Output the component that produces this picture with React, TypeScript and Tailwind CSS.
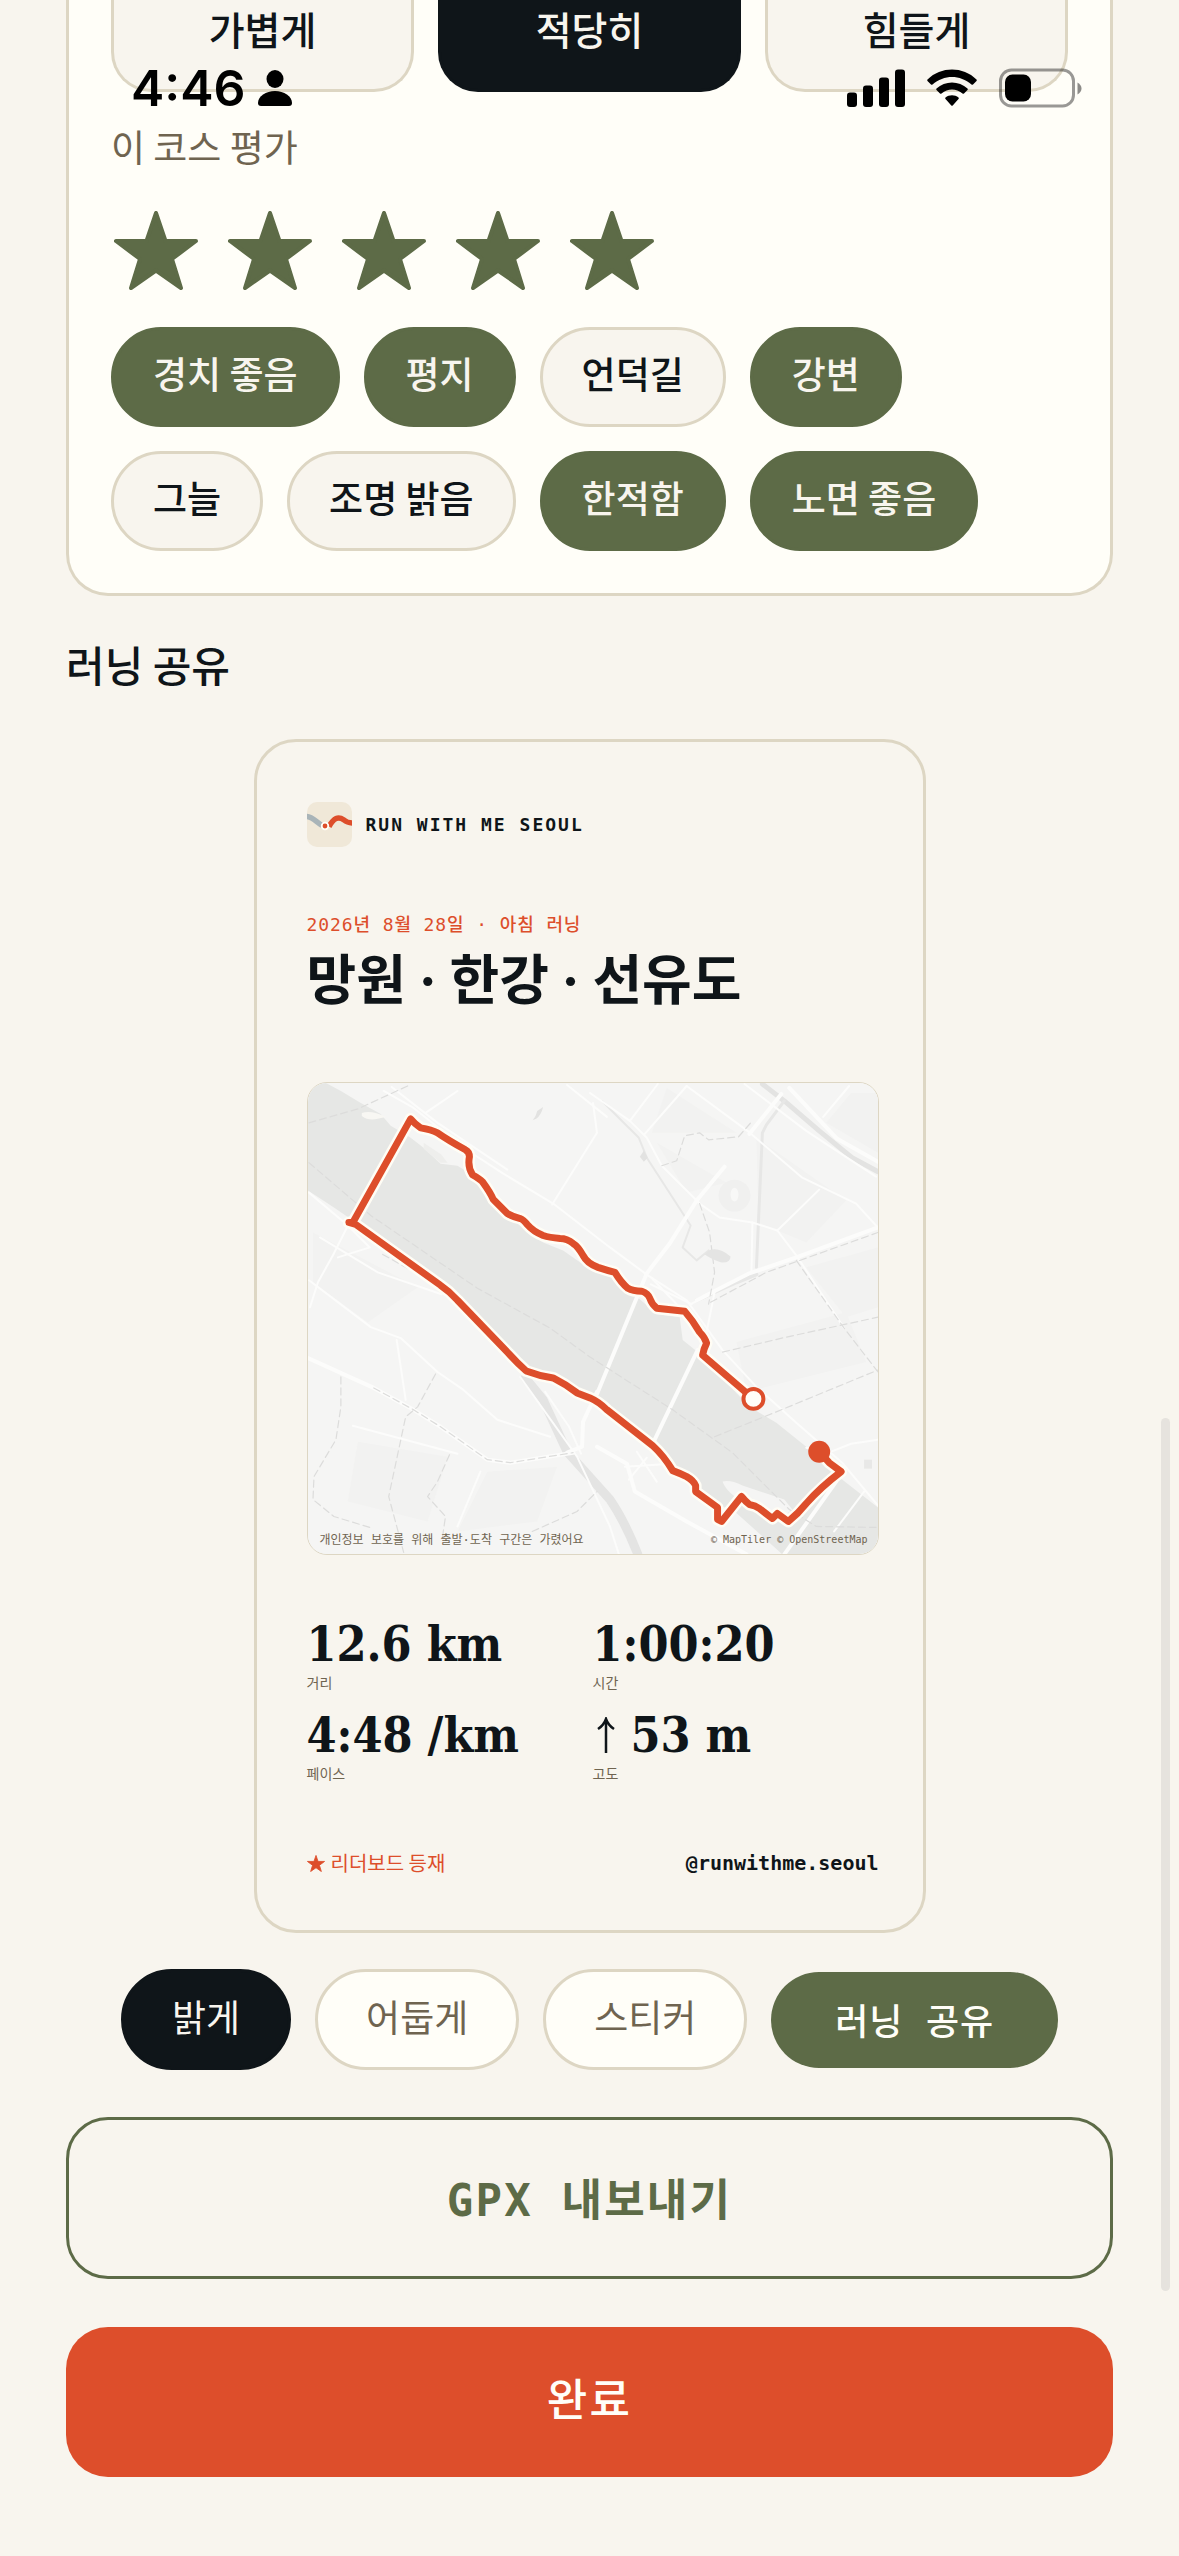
import { useState } from "react";
import { clsx } from "clsx";

const efforts = ["가볍게", "적당히", "힘들게"];

const tags = [
  "경치 좋음",
  "평지",
  "언덕길",
  "강변",
  "그늘",
  "조명 밝음",
  "한적함",
  "노면 좋음",
];

const themes = ["밝게", "어둡게", "스티커"];

const stats = [
  { label: "거리", value: "12.6 km" },
  { label: "시간", value: "1:00:20" },
  { label: "페이스", value: "4:48 /km" },
  { label: "고도", value: "53 m", climb: true },
];

const route =
  "M447 317 L396 273 Q397 267 400 261 Q398 255 393 250 Q386 238 378 229 L350 226 Q345 222 343 216 Q341 211 335 209 Q326 209 321 206 Q314 200 308 190 Q300 188 291 185 Q280 181 276 173 Q271 164 266 161 Q260 156 253 156 Q242 155 236 153 Q226 149 220 142 Q216 137 213 136 Q205 134 200 131 L186 117 Q183 110 175 99 Q172 96 165 92 Q160 84 162 74 Q162 69 158 67 Q140 57 130 50 Q124 47 113 45 Q107 41 103 36 L45 140 L41 140 L48 142 L133 203 Q142 209 150 218 L201 271 Q210 281 219 289 Q232 294 246 296 Q258 302 270 311 L283 316 Q292 320 300 328 L346 364 Q357 374 366 389 Q374 392 380 395 Q387 399 389 404 L389 410 Q400 418 411 426 L411 438 L415 440 L435 415 Q439 420 443 423 Q449 424 453 427 L466 437 L471 432 L482 440 Q492 432 500 422 Q514 406 535 390 L523 381 L513 370";

const river =
  "M0 0 H18 L33 8 L53 20 L73 31 L83 43 L103 55 L116 65 L133 81 L150 83 L163 91 L183 116 L216 146 L236 160 L256 168 L283 187 L303 193 L313 205 L333 217 L350 232 L373 235 L376 258 L391 270 L443 325 L470 341 L500 365 L536 398 L572 426 V473 H476 L426 428 L411 424 L366 386 L346 361 L300 325 L283 314 L246 294 L219 287 L201 268 L150 215 L133 200 L48 140 L26 125 L0 108 Z";

const wideRoads = [
  "M483 5 L531 56 L572 79",
  "M418 84 L390 118 L363 161 L340 191 L290 312",
  "M391 268 L346 362",
  "M572 145 L490 175 L443 191 L390 218",
  "M475 11 L443 51",
  "M0 276 L66 306 L106 328 L133 345 L180 378 L203 381 L266 371",
  "M530 400 L478 473",
  "M290 310 L276 340 L275 365 L260 371",
  "M290 365 L320 382 L328 410 L380 440 L440 473",
];

const roads = [
  "M283 10 L323 38 L340 55 L355 83 L393 121 L413 135 L446 140 L471 148 L490 173 L538 246",
  "M76 8 L106 25 L156 65 L196 91 L246 121 L303 165 L341 193 L380 218 L416 268 L450 305 L490 341 L536 381 L572 424",
  "M84 4 L130 40 L200 87",
  "M380 3 L338 51",
  "M351 1 L323 38",
  "M380 3 L441 48 L496 95 L550 121 L570 143",
  "M438 1 L500 48 L570 94",
  "M446 140 L445 190",
  "M471 148 L513 107",
  "M517 34 L543 3",
  "M1 110 L40 143 L26 171 L10 200 L2 225",
  "M40 143 L62 165 L30 175",
  "M12 155 L70 190 L134 212",
  "M1 198 L63 245 L93 256 L130 290 L156 308 L190 338 L243 355",
  "M89 258 L98 318",
  "M213 295 L270 375 L303 445 L312 473",
  "M238 310 L262 345 L274 372",
  "M45 344 L150 372",
  "M173 390 L150 445",
  "M150 8 L118 30",
  "M260 2 L300 34",
  "M245 122 L290 50 L286 20",
  "M572 358 L545 362 L520 372 L500 366",
  "M384 222 L408 210 L396 270",
  "M340 376 L322 398 M330 370 L350 400 M318 385 L365 382",
  "M558 410 L528 450",
  "M370 222 L345 196 M385 222 L344 202",
];

const dashed = [
  "M1 80 L63 133 L170 206 L243 246 L283 275 L366 328 L426 371 L483 428 L510 445 L570 446",
  "M1 40 L50 26 L100 3",
  "M355 83 L370 78 L378 53 L393 50 L402 57 L432 54 L446 38",
  "M393 121 L403 150 L408 190 L402 222",
  "M66 306 L106 328 L133 345 L180 378 L203 381 L266 371",
  "M128 292 L110 325 L98 335 L81 415 L96 471",
  "M33 295 L33 325 L28 358 L6 395 L5 418 L26 435 L62 446",
  "M142 373 L130 400 L120 415 L138 435 L135 455",
  "M75 172 L130 203",
  "M416 270 L480 255 L572 235",
  "M408 355 L470 330 L572 288",
  "M490 178 L538 246 L572 290",
  "M404 220 L460 190 L572 150",
  "M225 450 L270 430 L290 410",
];

const blocks = [
  "M350 60 L420 100 L380 110 Z",
  "M450 55 L540 118 L500 160 L452 140 Z",
  "M360 5 L430 50 L380 50 L345 50 Z",
  "M520 40 L545 10 L572 10 V70 Z",
  "M5 150 L110 205 L60 240 L5 200 Z",
  "M50 360 L140 375 L120 440 L40 420 Z",
  "M180 390 L250 385 L230 440 L150 450 Z",
  "M430 260 L540 230 L560 280 L440 310 Z",
  "M500 185 L572 165 V225 L540 235 Z",
];

function StarIcon({ className }: { className?: string }) {
  return (
    <svg
      viewBox="0 0 84 80"
      className={className}
      fill="currentColor"
      stroke="currentColor"
      strokeWidth="4"
      strokeLinejoin="round"
      aria-hidden="true"
    >
      <path d="M42 2 L51.500 30 H82 L58 48 L67 77 L42 59.500 L17 77 L26 48 L2 30 H32.500 Z" />
    </svg>
  );
}

function ClimbIcon() {
  return (
    <svg
      viewBox="0 0 26 36"
      className="h-9 w-[26px]"
      fill="none"
      stroke="currentColor"
      strokeWidth="2.500"
      role="img"
      aria-label="상승"
    >
      <path d="M13 36 V3" />
      <path d="M5 12 Q11 8 13 2 Q15 8 21 12" />
    </svg>
  );
}

function StatusBar() {
  return (
    <div className="absolute inset-x-0 top-0 flex items-center justify-between pt-[58px] pr-[97px] pl-[131px] text-black">
      <div className="flex items-center gap-3">
        <span className="font-['Inter',sans-serif] text-[50px] leading-[60px] font-semibold">
          4:46
        </span>
        <svg viewBox="0 0 34 36" className="h-9 w-[34px]" aria-hidden="true">
          <ellipse cx="17" cy="9" rx="8.500" ry="9" />
          <path d="M0 33 C0 26 8 21 17 21 S34 26 34 33 Q34 36 31 36 H3 Q0 36 0 33 Z" />
        </svg>
      </div>
      <div className="flex items-center gap-[22px]">
        <svg viewBox="0 0 58 38" className="h-[38px] w-[58px]" aria-hidden="true">
          <rect x="0" y="23.500" width="10" height="14.500" rx="3" />
          <rect x="16" y="16.500" width="10" height="21.500" rx="3" />
          <rect x="32" y="8.500" width="10" height="29.500" rx="3" />
          <rect x="48" y="0.500" width="10" height="37.500" rx="3" />
        </svg>
        <svg viewBox="0 0 50 38" className="h-[38px] w-[50px]" aria-hidden="true">
          <path d="M0.500 10.500 C14 -2.800 36 -2.800 49.500 10.500 Q50 11.200 49.500 12 L46 15.500 Q45.300 16 44.500 15.500 C33 5.500 17 5.500 5.500 15.500 Q4.700 16 4 15.500 L0.500 12 Q0 11.200 0.500 10.500 Z" />
          <path d="M9.500 19.500 C18 11.500 32 11.500 40.500 19.500 Q41.200 20.200 40.500 21 L37 24.500 Q36.300 25 35.500 24.500 C29 19 21 19 14.500 24.500 Q13.700 25 13 24.500 L9.500 21 Q8.800 20.200 9.500 19.500 Z" />
          <path d="M18.500 28.500 C22 25.500 28 25.500 31.500 28.500 Q32.300 29.200 31.500 30 L25.700 36.500 Q25 37.200 24.300 36.500 L18.500 30 Q17.700 29.200 18.500 28.500 Z" />
        </svg>
        <svg viewBox="0 0 83 40" className="h-10 w-[83px]" aria-hidden="true">
          <rect
            x="1.500"
            y="2"
            width="73"
            height="36"
            rx="11"
            fill="none"
            stroke="black"
            strokeOpacity="0.4"
            strokeWidth="3"
          />
          <rect x="6" y="6.500" width="26" height="27" rx="7.500" />
          <path d="M78.500 14.500 Q82.500 17 82.500 20.500 T78.500 26.500 Z" opacity="0.45" />
        </svg>
      </div>
    </div>
  );
}

function Logo() {
  return (
    <svg viewBox="0 0 45 45" className="size-[45px] rounded-[10px]" aria-hidden="true">
      <rect width="45" height="45" fill="#f0e8d8" />
      <path d="M-1 14.500 C5 14.500 8 19 15 23.500" fill="none" stroke="#a9b4b8" strokeWidth="5.500" />
      <path
        d="M22 24.500 C27 16 31 14 37 18 C40 20.500 42 21 46 21"
        fill="none"
        stroke="#dd4e2b"
        strokeWidth="5.500"
      />
      <circle cx="18" cy="24" r="3.300" fill="#dd4e2b" stroke="#fffef8" strokeWidth="1.800" />
    </svg>
  );
}

function RouteMap() {
  return (
    <div className="relative overflow-hidden rounded-[20px] border border-[#ddd6c3] bg-[#f5f5f4]">
      <svg viewBox="0 0 572 473" className="block w-full" role="img" aria-label="러닝 경로">
        <rect width="572" height="473" fill="#f5f5f4" />
        <g fill="#f2f2f1">
          {blocks.map((d) => (
            <path key={d} d={d} />
          ))}
        </g>
        <path d={river} fill="#e6e7e5" />
        <path d="M54 30 Q64 27 78 34 L70 36 Q60 38 54 33 Z" fill="#f8f7f3" />
        <path d="M116 60 L134 72 L140 80 L133 80 L116 66 Z" fill="#eeeeec" />
        <path d="M416 400 Q424 398 436 404 L478 418 L486 428 L476 436 L440 422 Q420 412 416 400 Z" fill="#f5f5f4" />
        <g fill="none" strokeLinejoin="round" strokeLinecap="round">
          <path d="M218 296 L236 318 L260 370 L303 418 Q318 440 331 473" stroke="#e4e4e3" strokeWidth="9" />
          <path d="M456 1 L478 18 L513 48 L546 75 L572 89" stroke="#e3e3e2" strokeWidth="5" />
          <path d="M478 18 L460 42 L456 50 L450 185" stroke="#e7e7e6" strokeWidth="3" />
          <path d="M295 18 L332 55 L340 75 L384 143 L376 165 L390 178 L402 168" stroke="#e7e7e6" strokeWidth="2" />
          <path d="M390 218 L430 200 L450 192" stroke="#e7e7e6" strokeWidth="4" />
          <g stroke="#fcfcfb" strokeWidth="4">
            {wideRoads.map((d) => (
              <path key={d} d={d} />
            ))}
          </g>
          <g stroke="#fcfcfb" strokeWidth="2">
            {roads.map((d) => (
              <path key={d} d={d} />
            ))}
          </g>
          <g stroke="#dcdcdb" strokeWidth="1.200" strokeDasharray="7 4">
            {dashed.map((d) => (
              <path key={d} d={d} />
            ))}
          </g>
        </g>
        <circle cx="428" cy="113" r="16" fill="#f0f0ef" />
        <ellipse cx="428" cy="112" rx="4" ry="7" fill="#f8f8f7" />
        <path d="M402 168 Q412 164 424 174 Q424 181 414 180 Q404 176 398 172 Z" fill="#e4e4e3" />
        <path d="M337 68 L341 75 L337 79 L333 74 Z" fill="#e2e2e1" />
        <path d="M224 38 Q228 36 230 28 L236 24 Q234 32 229 36 Z" fill="#e2e2e1" />
        <rect x="558" y="378" width="8" height="9" fill="#e8e8e7" />
        <g fill="none" strokeLinejoin="round" strokeLinecap="round">
          <path d={route} stroke="#fffdf5" strokeWidth="12" />
          <path d={route} stroke="#dd4e2b" strokeWidth="7" />
        </g>
        <circle cx="447" cy="317" r="10" fill="#fffef8" stroke="#dd4e2b" strokeWidth="4" />
        <circle cx="513" cy="370" r="11" fill="#dd4e2b" />
      </svg>
      <div className="absolute inset-x-0 bottom-[6px] flex items-center justify-between pr-[10px] pl-3 font-['DejaVu_Sans_Mono','Noto_Sans_CJK_KR',monospace] leading-4 text-[#6f6450]">
        <span className="text-[12px]">개인정보 보호를 위해 출발·도착 구간은 가렸어요</span>
        <span className="text-[10px]">© MapTiler © OpenStreetMap</span>
      </div>
    </div>
  );
}

function ShareCard() {
  return (
    <article className="mx-auto w-full max-w-[672px] rounded-[42px] border-3 border-[#ddd6c3] pt-[60px] pr-11 pb-[53px] pl-[50px]">
      <div className="flex items-center gap-[14px]">
        <Logo />
        <span className="font-['DejaVu_Sans_Mono',monospace] text-[18px] font-bold tracking-[2px]">
          RUN WITH ME SEOUL
        </span>
      </div>
      <p className="mt-16 font-['DejaVu_Sans_Mono','Noto_Sans_CJK_KR',monospace] text-[18px] leading-7 font-medium tracking-wider text-[#dd4e2b]">
        2026년 8월 28일 · 아침 러닝
      </p>
      <h3 className="mt-[10px] mb-[69px] font-['Inter','Noto_Sans_CJK_KR',sans-serif] text-[54px] leading-16 font-bold">
        망원 · 한강 · 선유도
      </h3>
      <RouteMap />
      <dl className="mt-[61px] grid grid-cols-2 gap-y-[15px]">
        {stats.map((stat) => (
          <div key={stat.label} className="flex flex-col-reverse">
            <dt className="text-[14px] leading-5 text-[#6f6450]">{stat.label}</dt>
            <dd className="flex items-center gap-3 font-['DejaVu_Serif_Condensed','Liberation_Serif',serif] text-[48px] leading-14 font-bold">
              {stat.climb && <ClimbIcon />}
              {stat.value}
            </dd>
          </div>
        ))}
      </dl>
      <div className="mt-[66px] flex items-center justify-between text-[20px] leading-7">
        <span className="flex items-center gap-[6px] text-[#dd4e2b]">
          <StarIcon className="w-[18px]" />
          리더보드 등재
        </span>
        <span className="font-['DejaVu_Sans_Mono',monospace] font-bold">@runwithme.seoul</span>
      </div>
    </article>
  );
}

export default function App() {
  const [effort, setEffort] = useState("적당히");
  const [rating, setRating] = useState(5);
  const [selected, setSelected] = useState(["경치 좋음", "평지", "강변", "한적함", "노면 좋음"]);
  const [theme, setTheme] = useState("밝게");

  const toggleTag = (tag: string) =>
    setSelected((prev) => (prev.includes(tag) ? prev.filter((t) => t !== tag) : [...prev, tag]));

  return (
    <div className="relative min-h-screen bg-[#f8f5ee] px-[66px] pb-[78px] font-['Noto_Sans_CJK_KR',sans-serif] text-[#0f1519]">
      <section className="rounded-b-[42px] border-3 border-t-0 border-[#ddd6c3] bg-[#fffef8] px-[42px] pb-[42px]">
        <div className="grid grid-cols-3 gap-6">
          {efforts.map((name) => (
            <button
              key={name}
              type="button"
              aria-pressed={effort === name}
              onClick={() => setEffort(name)}
              className={clsx(
                "rounded-b-[40px] border-3 border-t-0 pb-[33px] text-[39px] leading-14 font-medium",
                effort === name
                  ? "border-[#0f1519] bg-[#0f1519] text-[#f8f5ee]"
                  : "border-[#ddd6c3] bg-[#f8f5ee]"
              )}
            >
              {name}
            </button>
          ))}
        </div>

        <p className="mt-[30px] text-[37px] leading-12 text-[#6f6450]">이 코스 평가</p>

        <div className="mt-[41px] flex gap-[30px] pl-[3px]">
          {[1, 2, 3, 4, 5].map((value) => (
            <button
              key={value}
              type="button"
              aria-label={`별점 ${value}점`}
              onClick={() => setRating(value)}
              className={value <= rating ? "text-[#5d6b47]" : "text-[#ddd6c3]"}
            >
              <StarIcon className="h-20 w-[84px]" />
            </button>
          ))}
        </div>

        <div className="mt-9 flex flex-wrap gap-6">
          {tags.map((tag) => (
            <button
              key={tag}
              type="button"
              aria-pressed={selected.includes(tag)}
              onClick={() => toggleTag(tag)}
              className={clsx(
                "rounded-full border-3 px-[39px] pt-[15px] pb-[23px] text-[37px] leading-14 font-medium",
                selected.includes(tag)
                  ? "border-[#5d6b47] bg-[#5d6b47] text-[#f8f5ee]"
                  : "border-[#ddd6c3] bg-[#f8f5ee]"
              )}
            >
              {tag}
            </button>
          ))}
        </div>
      </section>

      <h2 className="mt-[38px] mb-[45px] text-[42px] leading-[60px] font-medium">러닝 공유</h2>

      <ShareCard />

      <div className="mt-9 flex flex-wrap items-center justify-center gap-6">
        {themes.map((name) => (
          <button
            key={name}
            type="button"
            aria-pressed={theme === name}
            onClick={() => setTheme(name)}
            className={clsx(
              "rounded-full border-3 px-12 pt-[18px] pb-[25px] text-[37px] leading-[52px]",
              theme === name
                ? "border-[#0f1519] bg-[#0f1519] text-[#f8f5ee]"
                : "border-[#ddd6c3] bg-[#fffef8] text-[#6f6450]"
            )}
          >
            {name}
          </button>
        ))}
        <button
          type="button"
          className="rounded-full bg-[#5d6b47] px-16 pt-[25px] pb-[19px] font-['DejaVu_Sans_Mono','Noto_Sans_CJK_KR',monospace] text-[36px] leading-[52px] font-medium tracking-wide text-[#fffef8]"
        >
          러닝 공유
        </button>
      </div>

      <button
        type="button"
        className="mt-[47px] w-full rounded-[42px] border-3 border-[#5d6b47] pt-[51px] pb-[45px] font-['DejaVu_Sans_Mono','Noto_Sans_CJK_KR',monospace] text-[44px] leading-[60px] font-bold tracking-wider text-[#5d6b47]"
      >
        GPX 내보내기
      </button>
      <button
        type="button"
        className="mt-12 w-full rounded-[42px] bg-[#dd4e2b] pt-10 pb-[50px] text-[44px] leading-[60px] font-medium tracking-wider text-[#fffef8]"
      >
        완료
      </button>

      <StatusBar />
      <div className="absolute top-[1418px] right-[9px] h-[873px] w-[9px] rounded-full bg-[#e6e3de]" />
    </div>
  );
}
